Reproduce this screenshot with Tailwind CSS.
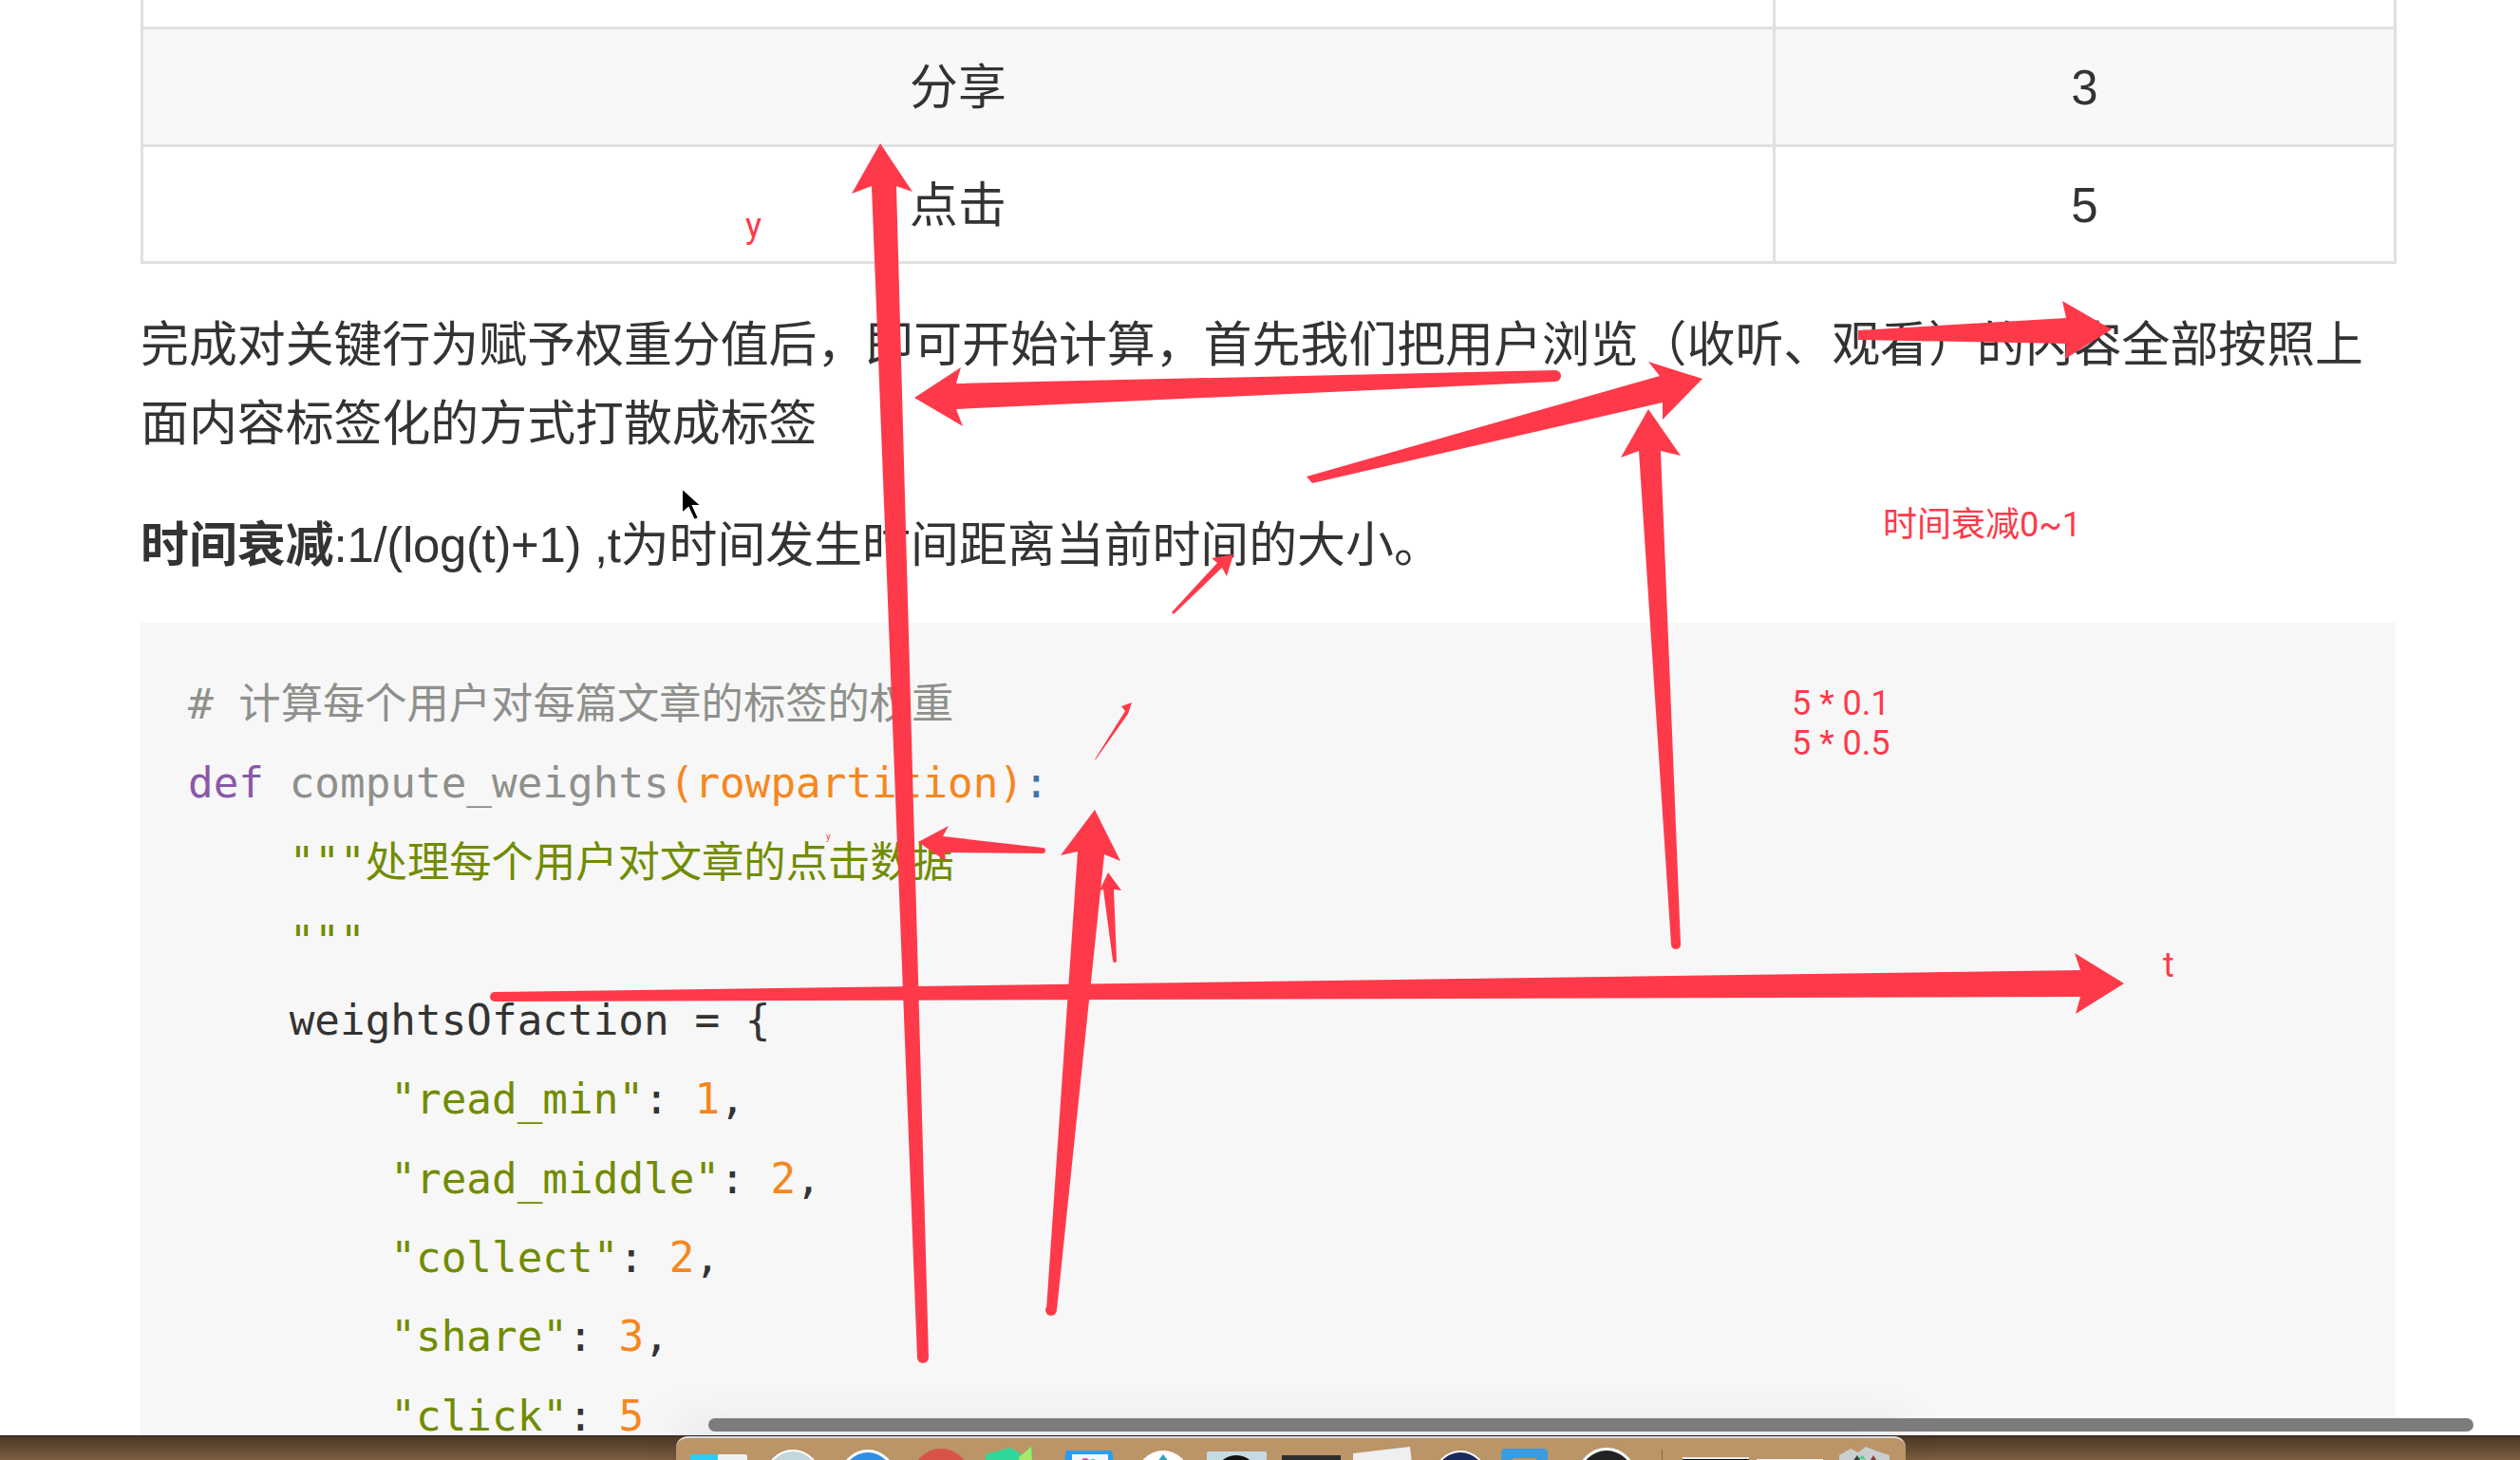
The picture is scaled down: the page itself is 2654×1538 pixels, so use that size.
<!DOCTYPE html>
<html lang="zh-CN">
  <head>
    <meta charset="UTF-8" />
    <meta name="viewport" content="width=device-width, initial-scale=1.0" />
    <script src="https://cdn.jsdelivr.net/npm/@tailwindcss/browser@4"></script>
    <title>时间衰减</title>
  </head>
  <body class="bg-white">
    <div class="relative flex flex-col h-[1538px] w-[2654px] overflow-hidden font-['Liberation_Sans','Noto_Sans_CJK_SC',sans-serif] text-[#333]">
      <!-- article -->
      <main class="h-[1512px] overflow-hidden pl-[148px] pr-[131px] text-[50.9px] leading-[83px]">
        <table class="w-[2373px] -mt-[95px] table-fixed border-collapse text-center">
          <colgroup>
            <col class="w-[1719px]" />
            <col class="w-[654px]" />
          </colgroup>
          <tbody>
            <tr class="h-[123px]">
              <td class="border-[3px] border-[#e0e0e0]">&nbsp;</td>
              <td class="border-[3px] border-[#e0e0e0]">&nbsp;</td>
            </tr>
            <tr class="h-[124px] bg-[#f8f8f8]">
              <td class="border-[3px] border-[#e0e0e0] pt-[2px]">分享</td>
              <td class="border-[3px] border-[#e0e0e0] pt-[2px]">3</td>
            </tr>
            <tr class="h-[123px]">
              <td class="border-[3px] border-[#e0e0e0] pt-[2px]">点击</td>
              <td class="border-[3px] border-[#e0e0e0] pt-[2px]">5</td>
            </tr>
          </tbody>
        </table>

        <p class="mt-[44px]">完成对关键行为赋予权重分值后，即可开始计算，首先我们把用户浏览（收听、观看）的内容全部按照上面内容标签化的方式打散成标签</p>
        <p class="mt-[45px]"><strong class="font-bold">时间衰减</strong><span class="tracking-[-0.3px]">:1/(log(t)+1) ,t</span>为时间发生时间距离当前时间的大小。</p>

        <pre class="mt-[40px] bg-[#f7f7f7] pl-[50px] pt-[44px] font-['DejaVu_Sans_Mono','Noto_Sans_CJK_SC',monospace] text-[44.3px] leading-[83.3px] text-[#333]"><span class="text-[#8e908c]"># 计算每个用户对每篇文章的标签的权重</span>
<span class="text-[#8959a8]">def</span> <span class="text-[#8e908c]">compute_weights</span><span class="text-[#f5871f]">(rowpartition)</span><span class="text-[#4271ae]">:</span>
    <span class="text-[#718c00]">"""处理每个用户对文章的点击数据</span>
    <span class="text-[#718c00]">"""</span>
    weightsOfaction = {
        <span class="text-[#718c00]">"read_min"</span>: <span class="text-[#f5871f]">1</span>,
        <span class="text-[#718c00]">"read_middle"</span>: <span class="text-[#f5871f]">2</span>,
        <span class="text-[#718c00]">"collect"</span>: <span class="text-[#f5871f]">2</span>,
        <span class="text-[#718c00]">"share"</span>: <span class="text-[#f5871f]">3</span>,
        <span class="text-[#718c00]">"click"</span>: <span class="text-[#f5871f]">5</span></pre>
      </main>

      <!-- wood desktop and dock -->
      <footer class="relative z-10 h-[26px] border-t border-[#2b2118] bg-gradient-to-b from-[#4a3724] to-[#7c5e40]">
        <div class="ml-[712px] h-[26px] w-[1295px] rounded-t-[12px] border-t-2 border-[#dcdcdc] bg-[#bb9468] shadow-[0_-12px_50px_rgba(0,0,0,0.1)]">
          <svg class="block" width="1295" height="26" viewBox="712 1512 1295 26" xmlns="http://www.w3.org/2000/svg">
            <!-- finder -->
            <path d="M727 1538v-7q0-2 2-2h27v9z" fill="#2bcdf5" />
            <path d="M756 1538v-9h29q2 0 2 2v7z" fill="#eef1f2" />
            <!-- contacts style round icons -->
            <circle cx="835" cy="1553" r="29" fill="#fff" />
            <circle cx="835" cy="1553" r="27" fill="#c2d6db" />
            <circle cx="914" cy="1553" r="29" fill="#fff" />
            <circle cx="914" cy="1553" r="26" fill="#2f8fe6" />
            <circle cx="991" cy="1553" r="30" fill="#d9534a" />
            <!-- green app -->
            <path d="M1038 1538v-9l26-7 14 8 9-9v17z" fill="#2fd89a" />
            <path d="M1073 1532l13-11 1 17h-14z" fill="#a8e86a" />
            <rect x="1048" y="1536" width="42" height="2" fill="#333" />
            <!-- keynote -->
            <path d="M1123 1525h48l2 13h-52z" fill="#2a9df0" />
            <rect x="1129" y="1529" width="38" height="9" fill="#f4f6f8" />
            <circle cx="1143" cy="1538" r="5" fill="#e04fb0" />
            <circle cx="1151" cy="1538" r="4" fill="#3cc" />
            <!-- white round -->
            <circle cx="1225" cy="1553" r="28" fill="#fff" />
            <path d="M1225 1529l7 9h-14z" fill="#2aa6c8" />
            <!-- square with dome -->
            <rect x="1271" y="1526" width="63" height="12" rx="2" fill="#c5dbe4" />
            <circle cx="1302" cy="1553" r="23" fill="#111" />
            <!-- terminal -->
            <rect x="1350" y="1530" width="62" height="8" fill="#2e2e2e" />
            <rect x="1358" y="1535" width="3" height="3" fill="#3fbf5f" />
            <!-- paper -->
            <path d="M1425 1538v-10l60-7 2 17z" fill="#efefef" />
            <!-- navy round -->
            <circle cx="1538" cy="1553" r="28" fill="#fff" />
            <circle cx="1538" cy="1553" r="26" fill="#1b2a5e" />
            <!-- blue square -->
            <path d="M1581 1538v-10q0-5 5-5h39q5 0 5 5v10z" fill="#3b9be0" />
            <rect x="1593" y="1533" width="25" height="5" fill="#bb9468" />
            <!-- dark round -->
            <circle cx="1692" cy="1553" r="31" fill="#fff" />
            <circle cx="1692" cy="1553" r="28" fill="#222" />
            <!-- separator -->
            <rect x="1750" y="1524" width="1" height="14" fill="#8f6a3f" />
            <!-- minimised windows -->
            <rect x="1772" y="1532" width="70" height="2" fill="#eee" />
            <rect x="1772" y="1534" width="70" height="4" fill="#111" />
            <rect x="1850" y="1534" width="70" height="2" fill="#f2f2f2" />
            <rect x="1850" y="1536" width="70" height="2" fill="#777" />
            <!-- trash -->
            <path d="M1937 1530l12-7 8 4 8-6 10 4 15 5v8h-53z" fill="#c9ced1" />
            <path d="M1950 1538l6-8 5 8z" fill="#3a3f44" />
            <path d="M1957 1533l5-3 3 5z" fill="#4fd08a" />
            <path d="M1968 1538l5-8 5 8z" fill="#8a3f3a" />
          </svg>
        </div>
      </footer>

      <!-- overlay scrollbar -->
      <div class="absolute left-[746px] top-[1494px] z-20 h-[14px] w-[1859px] rounded-full bg-[#757575]/95"></div>

      <!-- hand drawn annotations -->
      <svg class="absolute left-0 top-0 z-0 pointer-events-none" width="2654" height="1538" viewBox="0 0 2654 1538" fill="#fe3a4a" xmlns="http://www.w3.org/2000/svg">
        <polygon points="927,151 961,202 944,196 978,1430 966,1430 918,196 897,204" />
        <circle cx="972" cy="1430" r="6" />
        <polygon points="963,419 1012,387 1007,404 1638,390 1638,402 1007,431 1014,449" />
        <circle cx="1638" cy="396" r="6" />
        <polygon points="1793,399 1736,381 1748,396 1376,502 1382,509 1751,424 1751,442" />
        <polygon points="2224,347 2172,317 2176,335 1957,348 1957,358 2176,362 2175,378" />
        <polygon points="1736,431 1770,480 1749,475 1770,995 1760,995 1726,475 1707,482" />
        <circle cx="1765" cy="995" r="5" />
        <polygon points="1299,584 1276,588 1282,593 1234,645 1236,647 1287,598 1292,607" />
        <polygon points="1192,740 1181,744 1185,749 1153,800 1154,800 1188,752" />
        <polygon points="967,887 999,870 993,881 1098,893 1098,899 995,898 996,907" />
        <circle cx="1098" cy="896" r="3" />
        <polygon points="1153,853 1180,907 1163,900 1113,1380 1102,1380 1135,897 1117,901" />
        <circle cx="1107" cy="1380" r="6" />
        <polygon points="1167,919 1181,938 1173,937 1176,1012 1172,1012 1162,937 1158,938" />
        <circle cx="1174" cy="1012" r="2" />
        <polygon points="2237,1036 2185,1004 2191,1022 521,1045 521,1055 2191,1050 2186,1068" />
        <circle cx="521" cy="1050" r="5" />
        <path d="M718 514v27l7-6 6 13 5-2-6-13h9z" fill="#000" stroke="#fff" stroke-width="2" />
      </svg>

      <div class="absolute left-[785px] top-[218px] z-0 text-[36px] leading-[40px] text-[#fe3a4a] font-['Roboto','Noto_Sans_CJK_SC',sans-serif]">y</div>
      <div class="absolute left-[870px] top-[877px] z-0 text-[10px] leading-[10px] text-[#fe3a4a] font-['Roboto','Noto_Sans_CJK_SC',sans-serif]">y</div>
      <div class="absolute left-[1983px] top-[533px] z-0 text-[36px] leading-[40px] text-[#fe3a4a] font-['Roboto','Noto_Sans_CJK_SC',sans-serif]">时间衰减0~1</div>
      <div class="absolute left-[1887px] top-[720px] z-0 text-[36px] leading-[42px] text-[#fe3a4a] font-['Roboto','Noto_Sans_CJK_SC',sans-serif]">5 * 0.1<br />5 * 0.5</div>
      <div class="absolute left-[2278px] top-[997px] z-0 text-[36px] leading-[40px] text-[#fe3a4a] font-['Roboto','Noto_Sans_CJK_SC',sans-serif]">t</div>
    </div>
  </body>
</html>
